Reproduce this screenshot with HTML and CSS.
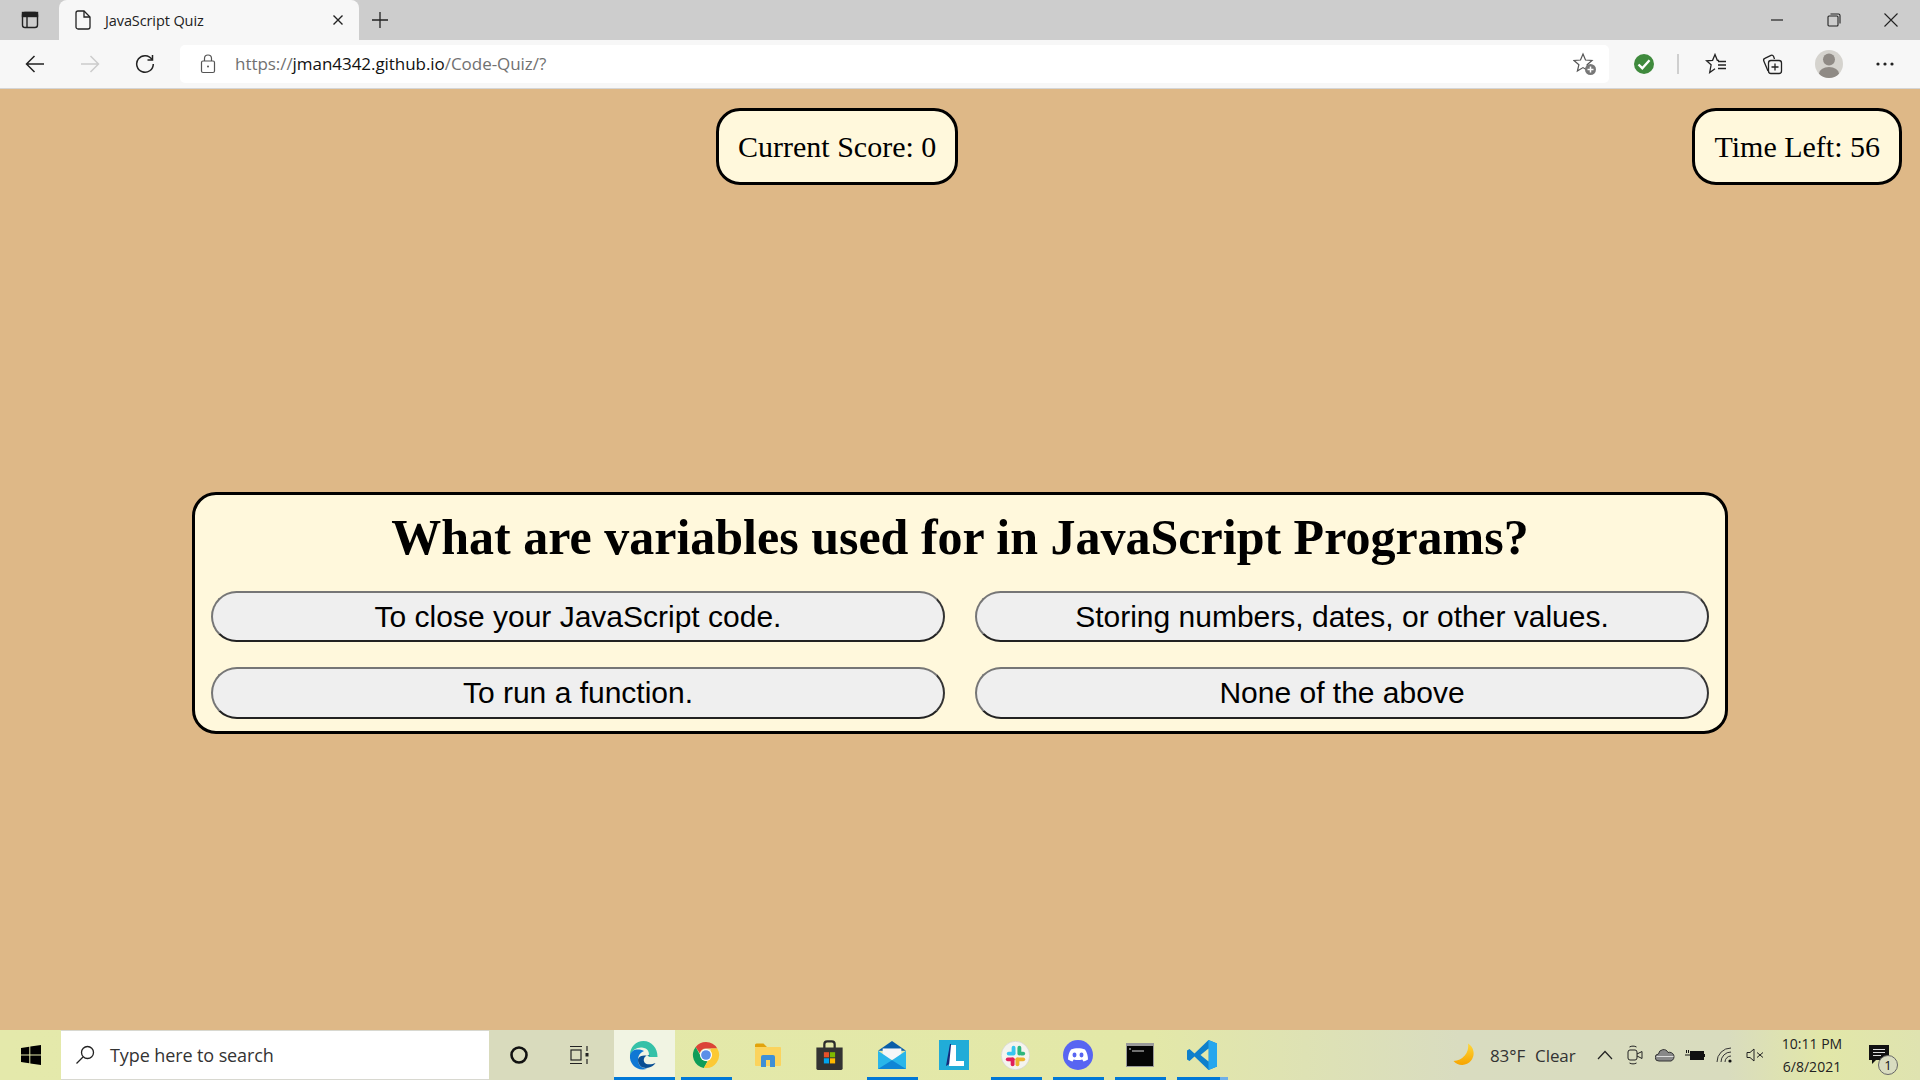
FILE: index.html
```html
<!DOCTYPE html>
<html lang="en">
<head>
  <meta charset="UTF-8">
  <meta name="viewport" content="width=device-width, initial-scale=1.0">
  <title>JavaScript Quiz</title>
  <link rel="stylesheet" href="styles.css">
</head>
<body>
  <div class="screen">
    <!-- browser tabs -->
    <div class="tabstrip">
      <div class="sidebar-btn">
        <svg width="20" height="20" viewBox="0 0 20 20" fill="none" stroke="#222" stroke-width="1.4"><rect x="2.5" y="2.5" width="15" height="15" rx="2.5"/><rect x="2.5" y="2.5" width="15" height="4" fill="#222"/><path d="M7 6v11"/></svg>
      </div>
      <div class="tab">
        <svg class="tab-doc" width="16" height="20" viewBox="0 0 16 20" fill="none" stroke="#222" stroke-width="1.3"><path d="M1 3a2 2 0 0 1 2-2h6l6 6v10a2 2 0 0 1-2 2H3a2 2 0 0 1-2-2z"/><path d="M9 1v6h6"/></svg>
        <span class="tab-title">JavaScript Quiz</span>
        <svg class="tab-close" width="12" height="12" viewBox="0 0 12 12" stroke="#222" stroke-width="1.4"><path d="M1.5 1.5l9 9M10.5 1.5l-9 9"/></svg>
      </div>
      <div class="new-tab">
        <svg width="18" height="18" viewBox="0 0 18 18" stroke="#222" stroke-width="1.3"><path d="M9 1v16M1 9h16"/></svg>
      </div>
      <div class="win-controls">
        <div class="win-btn"><svg width="14" height="14" viewBox="0 0 14 14" stroke="#222" stroke-width="1.2"><path d="M1 7h12"/></svg></div>
        <div class="win-btn"><svg width="14" height="14" viewBox="0 0 14 14" fill="none" stroke="#222" stroke-width="1.1"><rect x="1" y="3" width="10" height="10" rx="1"/><path d="M3.5 1h8A1.500 1.500 0 0 1 13 2.500v8"/></svg></div>
        <div class="win-btn"><svg width="14" height="14" viewBox="0 0 14 14" stroke="#222" stroke-width="1.1"><path d="M.5.5l13 13M13.5.5l-13 13"/></svg></div>
      </div>
    </div>

    <!-- address bar -->
    <div class="toolbar">
      <div class="nav-btns">
        <div class="tool-btn"><svg width="20" height="20" viewBox="0 0 20 20" fill="none" stroke="#222" stroke-width="1.5"><path d="M19 10H1.500M9.500 2l-8 8 8 8"/></svg></div>
        <div class="tool-btn"><svg width="20" height="20" viewBox="0 0 20 20" fill="none" stroke="#ccc" stroke-width="1.5"><path d="M1 10h17.500M10.500 2l8 8-8 8"/></svg></div>
        <div class="tool-btn"><svg width="20" height="20" viewBox="0 0 20 20" fill="none" stroke="#222" stroke-width="1.5"><path d="M17 5.500A8.300 8.300 0 1 0 18.300 10"/><path d="M17.500 1v5h-5"/></svg></div>
      </div>
      <div class="address">
        <svg class="lock" width="16" height="20" viewBox="0 0 16 20" fill="none" stroke="#555" stroke-width="1.2"><rect x="1.5" y="7" width="13" height="11.500" rx="1.500"/><path d="M4.500 7V4.500a3.500 3.500 0 0 1 7 0V7"/><circle cx="8" cy="12.500" r="1" fill="#555" stroke="none"/></svg>
        <span class="url"><span class="url-dim">https://</span>jman4342.github.io<span class="url-dim">/Code-Quiz/?</span></span>
        <svg class="star-add" width="24" height="24" viewBox="0 0 24 24"><path d="M10 2l2.500 6 6.500.5-4.900 4.200 1.500 6.300L10 15.600 4.400 19l1.500-6.300L1 8.500 7.500 8z" fill="none" stroke="#555" stroke-width="1.200"/><circle cx="17.500" cy="17.500" r="5.500" fill="#777"/><path d="M17.500 14.500v6M14.500 17.500h6" stroke="#fff" stroke-width="1.500"/></svg>
      </div>
      <div class="tool-btn">
        <svg width="22" height="22" viewBox="0 0 22 22"><circle cx="11" cy="11" r="10" fill="#3f8a3d"/><path d="M5.500 11.500l3.800 3.700 7.200-8" fill="none" stroke="#fff" stroke-width="2.400"/></svg>
      </div>
      <div class="tool-sep"></div>
      <div class="tool-btn"><svg width="22" height="22" viewBox="0 0 22 22" fill="none" stroke="#222" stroke-width="1.300"><path d="M14 7.500l-1.700-.2L10 1.500 7.600 7.300 1.500 7.800l4.600 4-1.400 7.700 5.300-3.700"/><path d="M13 8.500h8M13 12h8M13 15.500h8"/></svg></div>
      <div class="tool-btn tool-coll"><svg width="22" height="22" viewBox="0 0 22 22" fill="none" stroke="#222" stroke-width="1.300"><path d="M7 18L2.800 8a2 2 0 0 1 1-2.600L10 2.300a2 2 0 0 1 2.500 1L13.500 6"/><rect x="7.500" y="7.500" width="13" height="13" rx="2.500"/><path d="M14 10.500v7M10.500 14h7"/></svg></div>
      <div class="tool-btn"><span class="avatar"><svg width="28" height="28" viewBox="0 0 28 28"><circle cx="14" cy="9.500" r="6" fill="#8f8a85"/><ellipse cx="14" cy="23.500" rx="10" ry="6.500" fill="#8f8a85"/></svg></span></div>
      <div class="tool-btn"><svg width="18" height="4" viewBox="0 0 18 4" fill="#222"><circle cx="2" cy="2" r="1.600"/><circle cx="9" cy="2" r="1.600"/><circle cx="16" cy="2" r="1.600"/></svg></div>
    </div>

    <!-- quiz page -->
    <main class="page">
      <div class="stats">
        <div class="stat-box">Current Score: 0</div>
        <div class="stat-box">Time Left: 56</div>
      </div>
      <section class="card">
        <h1>What are variables used for in JavaScript Programs?</h1>
        <div class="answers">
          <button class="answer">To close your JavaScript code.</button>
          <button class="answer">Storing numbers, dates, or other values.</button>
          <button class="answer">To run a function.</button>
          <button class="answer">None of the above</button>
        </div>
      </section>
    </main>

    <!-- windows taskbar -->
    <footer class="taskbar">
      <div class="start">
        <svg width="20" height="20" viewBox="0 0 20 20" fill="#000"><path d="M0 3l8.300-1.200v7.700H0zM9.300 1.600L20 0v9.500H9.300zM0 10.500h8.300v7.700L0 17zM9.300 10.500H20V20L9.300 18.400z"/></svg>
      </div>
      <div class="search">
        <svg width="20" height="20" viewBox="0 0 20 20" fill="none" stroke="#222" stroke-width="1.300"><circle cx="12.500" cy="7.500" r="6"/><path d="M8 12L1.500 18.500"/></svg>
        <span>Type here to search</span>
      </div>
      <div class="assist">
        <div class="assist-btn"><svg width="20" height="20" viewBox="0 0 20 20" fill="none" stroke="#111" stroke-width="2.600"><circle cx="10" cy="10" r="7.500"/></svg></div>
        <div class="assist-btn"><svg width="22" height="20" viewBox="0 0 22 20" fill="none" stroke="#222" stroke-width="1.200"><path d="M2 1.500h12M2 18.500h12"/><rect x="3" y="5" width="10" height="10"/><path d="M19 1v5M19 14v5"/><rect x="17.500" y="8" width="3" height="3.500" fill="#222" stroke="none"/></svg></div>
      </div>
      <div class="apps">
        <div class="app app-active">
          <svg width="30" height="30" viewBox="0 0 30 30"><path d="M28.500 17C28.800 8 22.500 1 14.500 1 7 1 1 7 1 15c2-5 7-8 12-7.500 6 .6 8 5 6.500 9.500z" fill="#35c1a8"/><path d="M1 15c-.8 8 5 14.500 12.500 14.500 1.800 0 3.500-.3 5-1-6 .5-9.500-3.500-9.500-8.500 0-4 2-7.500 6-9-7-3-12.700-1-14 4z" fill="#0f78d4"/><path d="M9 20c0 6 5.500 10 12.500 7 2.500-1 3.800-2.300 5-4-4 2-9.500 1.800-11-.5-1.500-2-.7-5 1.500-6.500 3-2 5-.5 3-.3C14 15 9 16 9 20z" fill="#0a4f94"/></svg>
        </div>
        <div class="app app-open">
          <svg width="28" height="28" viewBox="0 0 30 30"><path d="M15 1a14 14 0 0 1 12.100 7H15a7 7 0 0 0-6.700 5L3.900 6.400A14 14 0 0 1 15 1z" fill="#db4437"/><path d="M3.900 6.400L10 17.500a7 7 0 0 0 6.600 4.300l-3.900 7A14 14 0 0 1 3.900 6.400z" fill="#0f9d58"/><path d="M27.100 8A14 14 0 0 1 12.700 28.800l6-10.400A7 7 0 0 0 20 10.500V8z" fill="#fcc934"/><circle cx="15" cy="15" r="6.500" fill="#fff"/><circle cx="15" cy="15" r="5.200" fill="#5b8fe8"/></svg>
        </div>
        <div class="app">
          <svg width="28" height="24" viewBox="0 0 28 24"><path d="M1 2A1.500 1.500 0 0 1 2.500.5h7L13 4H1z" fill="#e2a30c"/><rect x="1" y="4" width="26" height="19" rx="1" fill="#fbd35d"/><path d="M7 24V14a2 2 0 0 1 2-2h10a2 2 0 0 1 2 2v10h-5v-7h-4v7z" fill="#3f8fd6"/></svg>
        </div>
        <div class="app">
          <svg width="29" height="30" viewBox="0 0 30 32"><path d="M9.500 9V4.500a3 3 0 0 1 3-3h5a3 3 0 0 1 3 3V9" fill="none" stroke="#2b2b2b" stroke-width="2.400"/><path d="M1 8h28v22.500a1.500 1.500 0 0 1-1.500 1.500h-25A1.500 1.500 0 0 1 1 30.500z" fill="#333"/><rect x="9" y="13" width="5.500" height="5.500" fill="#e8502a"/><rect x="15.500" y="13" width="5.500" height="5.500" fill="#7fba00"/><rect x="9" y="19.500" width="5.500" height="5.500" fill="#00a4ef"/><rect x="15.500" y="19.500" width="5.500" height="5.500" fill="#ffb900"/></svg>
        </div>
        <div class="app app-open">
          <svg width="30" height="28" viewBox="0 0 30 30"><path d="M0 10.500L15 0l15 10.500z" fill="#0a5ea8"/><path d="M5 8h20v12H5z" fill="#f4f6f8"/><path d="M0 10.500l15 10 15-10V30H0z" fill="#29b6ea"/><path d="M0 30l15-9.500L30 30z" fill="#0f86d6"/></svg>
        </div>
        <div class="app">
          <svg width="30" height="30" viewBox="0 0 30 30"><rect width="30" height="30" fill="#21acd8"/><path d="M7 26L11 4h1v19z" fill="#152a7a"/><path d="M12 5h5v16h8v5H10z" fill="#fff"/></svg>
        </div>
        <div class="app app-open">
          <svg width="29" height="29" viewBox="0 0 30 30"><circle cx="15" cy="15" r="14.700" fill="#f4f4ee" stroke="#ccc" stroke-width=".6"/><rect x="11" y="5" width="4" height="9" rx="2" fill="#36c5f0"/><rect x="6" y="11" width="9" height="4" rx="2" fill="#36c5f0"/><rect x="17" y="5" width="4" height="10" rx="2" fill="#2eb67d"/><rect x="19" y="11" width="6" height="4" rx="2" fill="#2eb67d"/><rect x="15" y="17" width="4" height="9" rx="2" fill="#ecb22e"/><rect x="15" y="17" width="10" height="4" rx="2" fill="#ecb22e"/><rect x="5" y="17" width="9" height="4" rx="2" fill="#e01e5a"/><rect x="10" y="17" width="4" height="9" rx="2" fill="#e01e5a"/></svg>
        </div>
        <div class="app app-open">
          <svg width="30" height="30" viewBox="0 0 30 30"><circle cx="15" cy="15" r="15" fill="#5865f2"/><path d="M8 9.500c4-1.800 10-1.800 14 0 2 3 3 6.500 3 10-1.500 1-3 1.700-4.500 2l-1.200-2c-3 .8-5.600.8-8.600 0l-1.200 2c-1.500-.3-3-1-4.500-2 0-3.500 1-7 3-10z" fill="#fff"/><ellipse cx="11.500" cy="15" rx="2" ry="2.400" fill="#5865f2"/><ellipse cx="18.500" cy="15" rx="2" ry="2.400" fill="#5865f2"/></svg>
        </div>
        <div class="app app-open">
          <svg width="28" height="24" viewBox="0 0 28 24"><rect width="28" height="24" fill="#9a9a9a"/><rect x="1" y="3" width="26" height="20" fill="#050505"/><path d="M3 6h2M6 8h12" stroke="#ddd" stroke-width="1"/></svg>
        </div>
        <div class="app app-open app-hover">
          <svg width="30" height="30" viewBox="0 0 30 30"><path d="M21.500 0L30 3.500v23L21.500 30l-14-13.500L2.500 21 0 19.500V10.500L2.500 9l5 4.500z" fill="#0f80cc"/><path d="M21.500 0L30 3.500v23L21.500 30z" fill="#26a6ee"/><path d="M21.500 8.500l-8 6.500 8 6.500z" fill="#e3e8ab"/></svg>
        </div>
      </div>
      <div class="tray">
        <svg class="moon" width="24" height="24" viewBox="0 0 24 24"><defs><linearGradient id="moon-fill" x1="0" y1="0" x2="0" y2="1"><stop offset="0" stop-color="#ffd83a"/><stop offset="1" stop-color="#f7a400"/></linearGradient></defs><path d="M15 .5A11.500 11.500 0 1 1 .5 18 15 15 0 0 0 15 .5z" fill="url(#moon-fill)"/></svg>
        <span class="weather"><span>83°F</span><span>Clear</span></span>
        <div class="tray-icons">
          <div class="tray-cell"><svg width="16" height="10" viewBox="0 0 16 10" fill="none" stroke="#222" stroke-width="1.200"><path d="M1 9l7-7.500L15 9"/></svg></div>
          <div class="tray-cell"><svg width="16" height="20" viewBox="0 0 16 20" fill="none" stroke="#222" stroke-width="1"><rect x="1" y="5" width="9" height="10" rx="2"/><path d="M10 9l5-2.500v7L10 11M2.500 2C4.500.8 7.500.8 9.500 2M2.500 18c2 1.200 5 1.200 7 0"/></svg></div>
          <div class="tray-cell"><svg width="20" height="14" viewBox="0 0 20 14"><path d="M4 13a3.500 3.500 0 0 1-.5-7A5 5 0 0 1 13 4.500 4 4 0 0 1 16 13z" fill="#888" stroke="#333"/><path d="M1.500 8.500h17" stroke="#ddd"/></svg></div>
          <div class="tray-cell"><svg width="20" height="14" viewBox="0 0 20 14" fill="none" stroke="#111"><rect x="5.500" y="3.500" width="13" height="8" fill="#111"/><path d="M19.500 6v3M0 7h5M1.500 2v3M3.500 2v3"/></svg></div>
          <div class="tray-cell"><svg width="18" height="16" viewBox="0 0 18 16" fill="none" stroke="#333"><path d="M1 15A14 14 0 0 1 15 1M5 15A10 10 0 0 1 15 5M9 15a6 6 0 0 1 6-6"/><circle cx="14" cy="14" r="1.600" fill="#111" stroke="none"/></svg></div>
          <div class="tray-cell"><svg width="18" height="14" viewBox="0 0 18 14" fill="none" stroke="#222"><path d="M1 4.500h3L8 1v12L4 9.500H1zM11 4.500l6 5M17 4.500l-6 5"/></svg></div>
        </div>
        <div class="clock"><span>10:11 PM</span><span>6/8/2021</span></div>
        <div class="notify">
          <svg width="22" height="22" viewBox="0 0 22 22"><path d="M1 1h20v15H8l-4 4v-4H1z" fill="#111"/><path d="M5 5.500h12M5 8.500h12M5 11.500h8" stroke="#ddd"/></svg>
          <span class="badge">1</span>
        </div>
      </div>
    </footer>
  </div>
</body>
</html>
```

FILE: styles.css
```css
:root {
  --page-bg: #deb887;
  --cream: #fff8dc;
  --chrome: #f7f7f7;
  --strip: #cdcdcd;
  --task-blue: #0078d7;
}

* {
  box-sizing: border-box;
}

body {
  margin: 0;
  font-family: 'Open Sans', sans-serif;
  color: #000;
}

.screen {
  height: 1080px;
  display: flex;
  flex-direction: column;
  overflow: hidden;
}

/* tab strip */
.tabstrip {
  height: 40px;
  display: flex;
  align-items: flex-end;
  background: var(--strip);
}

.sidebar-btn {
  width: 59px;
  height: 40px;
  display: flex;
  align-items: center;
  justify-content: center;
}

.tab {
  width: 300px;
  height: 40px;
  display: flex;
  align-items: center;
  padding: 0 15px 0 16px;
  background: var(--chrome);
  border-radius: 8px 8px 0 0;
}

.tab-title {
  margin-left: 14px;
  font-size: 14.5px;
  letter-spacing: -0.1px;
  color: #222;
}

.tab-close {
  margin-left: auto;
}

.new-tab {
  width: 42px;
  height: 40px;
  display: flex;
  align-items: center;
  justify-content: center;
}

.win-controls {
  margin-left: auto;
  height: 40px;
  display: flex;
  padding-right: 1px;
}

.win-btn {
  width: 57px;
  height: 40px;
  display: flex;
  align-items: center;
  justify-content: center;
}

/* address bar */
.toolbar {
  height: 49px;
  display: flex;
  align-items: center;
  padding: 0 7px 1px 7px;
  background: var(--chrome);
  border-bottom: 1px solid #d5d5d5;
}

.nav-btns {
  display: flex;
  margin-right: 8px;
}

.tool-btn {
  width: 56px;
  height: 38px;
  display: flex;
  align-items: center;
  justify-content: center;
  flex: none;
}

.tool-coll {
  width: 55px;
  margin-right: 2px;
}

.nav-btns .tool-btn {
  width: 55px;
}

.address {
  flex: 1;
  height: 38px;
  display: flex;
  align-items: center;
  padding: 0 12px 0 20px;
  background: #fff;
  border-radius: 5px;
  margin-right: 7px;
}

.url {
  margin-left: 19px;
  font-size: 17px;
  letter-spacing: -0.05px;
  color: #111;
}

.url-dim {
  color: #717171;
}

.star-add {
  margin-left: auto;
}

.tool-sep {
  width: 2px;
  height: 20px;
  margin: 0 9px 0 5px;
  background: #cfcfcf;
  flex: none;
}

.avatar {
  width: 28px;
  height: 28px;
  border-radius: 50%;
  background: #d5d3ce;
  overflow: hidden;
}

/* quiz */
.page {
  flex: 1;
  background: var(--page-bg);
  padding-top: 19px;
}

.stats {
  display: flex;
  justify-content: space-between;
  padding: 0 18px 0 716px;
}

.stat-box {
  padding: 19px;
  background: var(--cream);
  border: 3px solid #000;
  border-radius: 24px;
  font-family: 'Liberation Serif', serif;
  font-size: 30px;
  line-height: 33px;
}

.card {
  width: 1536px;
  margin: 307px auto 0;
  padding: 0 16px 12px;
  background: var(--cream);
  border: 3px solid #000;
  border-radius: 24px;
}

.card h1 {
  margin: 0;
  padding: 15px 0 26px;
  text-align: center;
  font-family: 'Liberation Serif', serif;
  font-size: 50px;
  line-height: 55px;
  font-weight: bold;
}

.answers {
  display: grid;
  grid-template-columns: 1fr 1fr;
  grid-template-rows: 51px 52px;
  column-gap: 30px;
  row-gap: 25px;
}

.answer {
  padding: 0;
  background: #efefef;
  border: 2px solid;
  border-color: #767676 #333 #222 #767676;
  border-radius: 26px;
  font-family: 'Liberation Sans', sans-serif;
  font-size: 30px;
  color: #000;
}

/* taskbar */
.taskbar {
  height: 50px;
  display: flex;
  background: linear-gradient(90deg, #e4e9ab 0, #e3e8a8 60%, #d9dcc0 76%, #d9dcbe 90%, #e2e7a8 95%, #dfe3b0 100%);
}

.start {
  width: 61px;
  display: flex;
  align-items: center;
  justify-content: center;
}

.search {
  width: 428px;
  display: flex;
  align-items: center;
  gap: 15px;
  padding: 0 0 0 14px;
  background: #fff;
  border: 1px solid #d8d8d0;
  border-width: 1px 0;
  font-size: 18px;
  letter-spacing: -0.1px;
  color: #333;
}

.assist {
  width: 125px;
  display: flex;
  background: #d9dbbd;
}

.assist-btn {
  width: 60px;
  display: flex;
  align-items: center;
  justify-content: center;
}

.apps {
  display: flex;
  gap: 1px;
}

.app {
  position: relative;
  width: 61px;
  padding-right: 2px;
  display: flex;
  align-items: center;
  justify-content: center;
}

/* running-app underline */
.app-open::after,
.app-active::after {
  content: "";
  position: absolute;
  left: 5px;
  right: 5px;
  bottom: 0;
  height: 3px;
  background: var(--task-blue);
}

.app-active {
  background: #f1f4e3;
}

.app-active::after {
  left: 0;
  right: 0;
}

.app-hover::after {
  background: linear-gradient(90deg, var(--task-blue) 85%, #6fb0e8 85%);
}

.tray {
  flex: 1;
  display: flex;
  align-items: center;
  padding-left: 220px;
}

.moon {
  flex: none;
}

.weather {
  width: 100px;
  margin-left: 13px;
  display: flex;
  gap: 10px;
  font-size: 17px;
  letter-spacing: -0.1px;
  color: #333;
  white-space: nowrap;
}

.tray-icons {
  display: flex;
  flex: none;
}

.tray-cell {
  width: 30px;
  display: flex;
  align-items: center;
  justify-content: center;
}

.clock {
  width: 84px;
  display: flex;
  flex-direction: column;
  align-items: center;
  gap: 5px;
  font-size: 14px;
  line-height: 18px;
  color: #222;
}

.notify {
  position: relative;
  margin-left: 14px;
  display: flex;
}

.badge {
  position: absolute;
  right: -8px;
  bottom: -9px;
  width: 20px;
  height: 20px;
  border-radius: 50%;
  border: 1px solid #666;
  background: #d9dcc0;
  font-size: 13px;
  line-height: 18px;
  text-align: center;
  color: #111;
}
```
